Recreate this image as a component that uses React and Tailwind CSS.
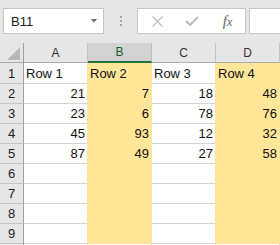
import React from "react";

const cols = ["A", "B", "C", "D"];
const yellow = [false, true, false, true];
const rows = [
  ["Row 1", "Row 2", "Row 3", "Row 4"],
  [21, 7, 18, 48],
  [23, 6, 78, 76],
  [45, 93, 12, 32],
  [87, 49, 27, 58],
  ["", "", "", ""],
  ["", "", "", ""],
  ["", "", "", ""],
  ["", "", "", ""],
];

function Cell({ value, fill, tall }) {
  const isNum = typeof value === "number";
  return (
    <div
      className={`${tall ? "h-[21px]" : "h-[20px]"} w-[64px] shrink-0 flex items-end border-r border-b text-[13px] leading-none pb-[3px] text-[#111] ${
        fill ? "bg-[#ffe699] border-[#ffe699]" : "bg-white border-b-[#d4d4d4] border-r-[#ffe699]"
      } ${isNum ? "justify-end pr-[2px]" : "justify-start pl-[2px]"}`}
    >
      {value}
    </div>
  );
}

export default function App() {
  return (
    <div className="w-[280px] h-[245px] overflow-hidden bg-white font-['Liberation_Sans',Arial,sans-serif]">
      {/* toolbar */}
      <div className="h-[43px] bg-[#e6e6e6] flex items-start pt-[8px] pl-[3px]">
        <div className="w-[101px] h-[26px] shrink-0 bg-white border border-[#c6c6c6] flex items-center justify-between pl-[7px] pr-[6px]">
          <span className="text-[13px] text-[#222] leading-none">B11</span>
          <svg width="6" height="4" viewBox="0 0 6 4">
            <path d="M0 0 L6 0 L3 3.5 Z" fill="#6a6a6a" />
          </svg>
        </div>
        <div className="w-[33px] h-[26px] shrink-0 flex flex-col items-center justify-center gap-[2px]">
          <div className="w-[2px] h-[2px] bg-[#a6a6a6]" />
          <div className="w-[2px] h-[2px] bg-[#a6a6a6]" />
          <div className="w-[2px] h-[2px] bg-[#a6a6a6]" />
        </div>
        <div className="w-[109px] h-[26px] shrink-0 bg-white border border-[#c6c6c6] flex items-center">
          <div className="w-[36px] flex justify-center pl-[2px]">
            <svg width="11" height="11" viewBox="0 0 11 11">
              <path d="M0.5 0.5 L10.5 10.5 M10.5 0.5 L0.5 10.5" stroke="#bdbdbd" strokeWidth="1.2" fill="none" />
            </svg>
          </div>
          <div className="w-[36px] flex justify-center">
            <svg width="14" height="10" viewBox="0 0 14 10">
              <path d="M1 5 L5 9 L13 1" stroke="#bdbdbd" strokeWidth="2" fill="none" />
            </svg>
          </div>
          <div className="w-[35px] flex justify-center">
            <span className="font-['Liberation_Serif',serif] italic text-[15px] leading-none text-[#666]">
              f<span className="text-[12px]">x</span>
            </span>
          </div>
        </div>
        <div className="ml-[3px] w-[60px] h-[26px] shrink-0 bg-white border border-[#c6c6c6]" />
      </div>

      {/* column header */}
      <div className="flex h-[20px]">
        <div className="w-[24px] shrink-0 h-[20px] bg-[#e6e6e6] border-r border-b border-r-[#9f9f9f] border-b-[#ababab] relative">
          <svg className="absolute left-[7px] top-[4px]" width="14" height="14" viewBox="0 0 14 14">
            <path d="M13 0 L13 13 L0 13 Z" fill="#b9b9b9" />
          </svg>
        </div>
        {cols.map((c, i) =>
          c === "B" ? (
            <div
              key={c}
              className="w-[64px] shrink-0 h-[20px] bg-[#d2d2d2] border-r border-r-[#c0c0c0] border-b-2 border-b-[#217346] flex items-center justify-center text-[12px] leading-none text-[#185c37]"
            >
              {c}
            </div>
          ) : (
            <div
              key={c}
              className="w-[64px] shrink-0 h-[20px] bg-[#e6e6e6] border-r border-b border-r-[#c6c6c6] border-b-[#ababab] flex items-center justify-center text-[12px] leading-none text-[#333]"
            >
              {c}
            </div>
          )
        )}
      </div>

      {/* rows */}
      {rows.map((r, ri) => (
        <div key={ri} className="flex">
          <div
            className={`${ri === 0 ? "h-[21px]" : "h-[20px]"} w-[24px] shrink-0 bg-[#e6e6e6] border-r border-b border-r-[#9f9f9f] border-b-[#c6c6c6] flex items-end justify-center pb-[3px] text-[13px] leading-none text-[#222]`}
          >
            {ri + 1}
          </div>
          {r.map((v, ci) => (
            <Cell key={ci} value={v} fill={yellow[ci]} tall={ri === 0} />
          ))}
        </div>
      ))}
      <div className="flex">
        <div className="h-[20px] w-[24px] shrink-0 bg-[#e6e6e6] border-r border-r-[#9f9f9f]" />
        {cols.map((c) => (
          <div key={c} className="h-[20px] w-[64px] shrink-0 bg-white border-r border-r-[#d4d4d4]" />
        ))}
      </div>
    </div>
  );
}
